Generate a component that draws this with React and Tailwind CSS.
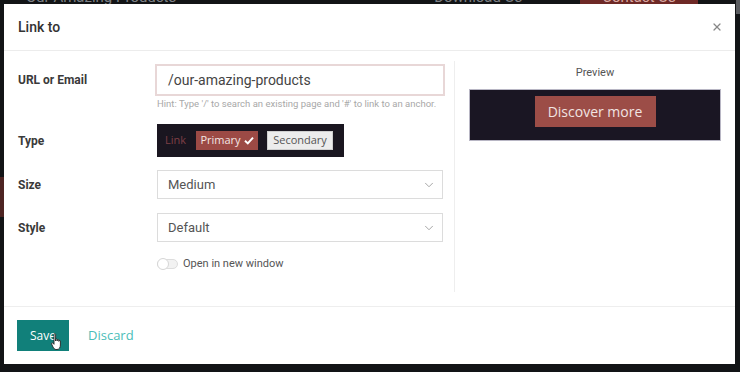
import { ChevronDown, X } from 'lucide-react';

function Row({ label, children, className = '' }) {
  return (
    <div className={`flex items-center ${className}`}>
      <div className="w-[137px] shrink-0 text-[12px] font-bold text-[#3a3a3a]">
        {label}
      </div>
      {children}
    </div>
  );
}

function SelectBox({ value }) {
  return (
    <div className="ml-[2px] flex h-[29px] w-[286px] items-center justify-between border border-[#dcdcdc] bg-white pl-[10px] pr-[6px] text-[13px] text-[#555]">
      <span>{value}</span>
      <ChevronDown size={14} strokeWidth={1.5} className="text-[#999]" />
    </div>
  );
}

export default function App() {
  return (
    <div className="relative h-[372px] w-[740px] overflow-hidden bg-[#121416] pl-[4px] pt-[4px] font-['Roboto',sans-serif]">
      {/* page behind the dialog */}
      <div className="absolute left-0 top-[-13px] flex w-full items-center text-[15px] leading-[20px] text-[#7d8085]">
        <span className="ml-[26px]">Our Amazing Products</span>
        <span className="ml-[258px]">Download Us</span>
        <span className="ml-[58px] bg-[#6e2926] px-[22px] text-[#d8a8a2]">Contact Us</span>
      </div>
      <div className="absolute left-0 top-[177px] h-[40px] w-[4px] bg-[#4d2422]" />
      <div className="absolute right-0 top-[0px] h-[14px] w-[4px] bg-[#5a5c60]" />

      <div className="relative flex h-[360px] w-[731px] flex-col bg-white">
        {/* header */}
        <div className="flex h-[47px] shrink-0 items-center justify-between border-b border-[#ececec] pl-[14px] pr-[12px]">
          <span className="text-[14px] font-medium text-[#333]">Link to</span>
          <X size={12} strokeWidth={2.5} className="text-[#888]" />
        </div>

        {/* body */}
        <div className="flex h-[255px] shrink-0 pb-[14px] pt-[10px]">
          <div className="flex w-[451px] flex-col border-r border-[#eeeeee] pl-[14px]">
            <div className="mt-[3px] flex items-start">
              <div className="flex h-[32px] w-[137px] shrink-0 items-center text-[12px] font-bold text-[#3a3a3a]">
                URL or Email
              </div>
              <div className="flex flex-col">
                <div className="flex h-[32px] w-[290px] items-center border-2 border-[#e8d7d7] px-[11px] text-[14px] text-[#444]">
                  /our-amazing-products
                </div>
                <div className="ml-[2px] mt-[2px] text-[9.5px] leading-[12px] text-[#a8a8a8]">
                  Hint: Type '/' to search an existing page and '#' to link to an anchor.
                </div>
              </div>
            </div>

            <Row label="Type" className="mt-[14px]">
              <div className="ml-[2px] flex h-[33px] w-[187px] items-center bg-[#1a1620] pl-[8px] font-['Open_Sans',sans-serif] text-[11px]">
                <span className="text-[#7e3f46]">Link</span>
                <span className="ml-[10px] flex h-[19px] w-[62px] items-center justify-center gap-[3px] bg-[#9c4a45] text-[#f3e6e4]">
                  Primary
                  <svg width="10" height="9" viewBox="0 0 10 9">
                    <path d="M1 4.8 L3.8 7.4 L9 1.6" fill="none" stroke="#fff" strokeWidth="2" />
                  </svg>
                </span>
                <span className="ml-[9px] flex h-[19px] w-[66px] items-center justify-center border border-[#cfcfcf] bg-[#ececec] text-[#555]">
                  Secondary
                </span>
              </div>
            </Row>

            <Row label="Size" className="mt-[13px]">
              <SelectBox value="Medium" />
            </Row>

            <Row label="Style" className="mt-[14px]">
              <SelectBox value="Default" />
            </Row>

            <div className="ml-[139px] mt-[15px] flex h-[14px] items-center">
              <div className="relative h-[10px] w-[21px] rounded-full border border-[#dddddd] bg-[#f2f2f2]">
                <div className="absolute left-[-1px] top-[-2px] h-[12px] w-[12px] rounded-full border border-[#d6d6d6] bg-white" />
              </div>
              <span className="ml-[5px] text-[11px] text-[#555]">Open in new window</span>
            </div>
          </div>

          <div className="flex flex-1 flex-col items-center">
            <div className="mt-[5px] text-[11px] leading-[14px] text-[#555]">Preview</div>
            <div className="mt-[9px] flex h-[52px] w-[252px] items-start justify-center border border-[#b8b6c4] bg-[#1a1623] pt-[6px]">
              <span className="flex h-[31px] w-[121px] items-center justify-center bg-[#9c4d47] font-['Open_Sans',sans-serif] text-[14px] text-[#f1e4e2]">
                Discover more
              </span>
            </div>
          </div>
        </div>

        {/* footer */}
        <div className="flex flex-1 items-start border-t border-[#eeeeee] pl-[13px] pt-[13px]">
          <div className="relative flex h-[31px] w-[52px] items-center justify-center bg-[#11807a] font-['Open_Sans',sans-serif] text-[12px] text-white">
            Save
            <svg className="absolute left-[34px] top-[13px]" width="12" height="18" viewBox="0 0 12 18">
              <path
                d="M3 1.5 C3 0.7 4.6 0.7 4.6 1.5 L4.6 8 L4.6 6.6 C4.6 5.8 6.2 5.8 6.2 6.6 L6.2 8 L6.2 7.2 C6.2 6.4 7.8 6.4 7.8 7.2 L7.8 8.4 L7.8 8 C7.8 7.2 9.4 7.2 9.4 8 L9.4 12 C9.4 14.5 8.2 16.5 6 16.5 L5 16.5 C3.6 16.5 2.8 15.4 2 14 L0.6 11 C0.2 10.2 1.2 9.4 1.9 10.1 L3 11.3 Z"
                fill="#fff"
                stroke="#222"
                strokeWidth="0.9"
              />
            </svg>
          </div>
          <div className="ml-[19px] flex h-[31px] items-center font-['Open_Sans',sans-serif] text-[13px] text-[#4bbdb8]">
            Discard
          </div>
        </div>
      </div>
    </div>
  );
}
